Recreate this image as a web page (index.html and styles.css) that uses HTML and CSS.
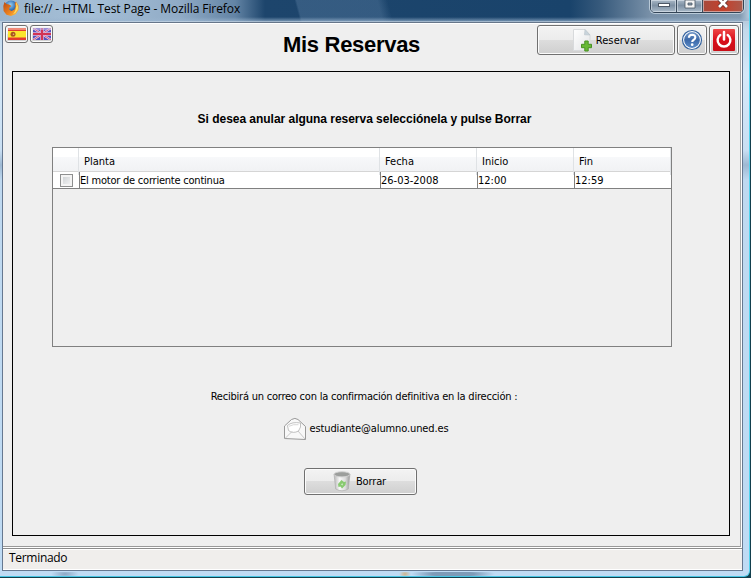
FILE: index.html
```html
<!DOCTYPE html>
<html lang="es">
<head>
<meta charset="utf-8">
<title>Mis Reservas</title>
<link rel="stylesheet" href="styles.css">
</head>
<body>
<div class="window">
  <header class="titlebar">
    <svg class="firefox" width="16" height="16" viewBox="0 0 16 16">
      <defs>
        <radialGradient id="globe" cx=".45" cy=".3" r=".7"><stop offset="0" stop-color="#9bd0f2"/><stop offset=".6" stop-color="#2867b0"/><stop offset="1" stop-color="#123069"/></radialGradient>
        <linearGradient id="fox" x1="0" y1="0" x2="1" y2="1"><stop offset="0" stop-color="#b84812"/><stop offset=".6" stop-color="#ee8420"/><stop offset="1" stop-color="#ffd34a"/></linearGradient>
      </defs>
      <circle cx="8" cy="7.6" r="7" fill="url(#globe)"/>
      <path d="M1.5 2 3.5 4 6 4.5 8.5 6 6.5 7.5 6 9.5 8.5 11 11.5 9.5 12.5 6.5 11.7 3.5 13 1.5 15.5 5.5 15.5 10 12.5 14.3 8 16 3.5 14.7.6 11 .3 6Z" fill="url(#fox)"/>
      <path d="M13 2Q16 6 14.5 10Q13 13 10 14Q14 10 13 2Z" fill="#ffdc62"/>
    </svg>
    <span class="window-title">file:// - HTML Test Page - Mozilla Firefox</span>
    <div class="controls">
      <span class="control"><svg width="14" height="9" viewBox="0 0 14 9"><rect x="1.5" y="3.5" width="11" height="3" fill="#fff" stroke="#4d5866"/></svg></span>
      <span class="control"><svg width="14" height="9" viewBox="0 0 14 9"><path d="M2 0H12V8H2ZM5 3V5H9V3Z" fill="#f4f4f4" fill-rule="evenodd" stroke="#4d5866" stroke-width=".8"/></svg></span>
      <span class="control close"><svg width="14" height="9" viewBox="0 0 14 9"><path d="M3-1 11 7M11-1 3 7" stroke="#5d3030" stroke-width="4.2"/><path d="M3-1 11 7M11-1 3 7" stroke="#fff" stroke-width="2.7"/></svg></span>
    </div>
  </header>
  <div class="client">
    <main class="page">
      <div class="toolbar">
        <div class="languages">
          <button class="btn flag" aria-label="Español"><svg width="18" height="12" viewBox="0 0 18 12"><path fill="#e33a2d" d="M0 0H18V12H0Z"/><path fill="#f08a78" d="M0 0H18V2H0Z"/><path fill="#fbe52c" d="M0 3H18V9.500H0Z"/><circle cx="5" cy="6.300" r="2.500" fill="#a8571c"/><circle cx="5.500" cy="6.300" r=".8" fill="#e9b08a"/></svg></button>
          <button class="btn flag" aria-label="English"><svg width="18" height="12" viewBox="0 0 18 12"><path fill="#5650bd" d="M0 0H18V12H0Z"/><path d="M0 0 18 12M18 0 0 12" stroke="#e6d5f0" stroke-width="2.200"/><path d="M0 0 18 12M18 0 0 12" stroke="#d0527c" stroke-width="1"/><path d="M9 0V12M0 6H18" stroke="#d9b6dd" stroke-width="3.600"/><path d="M9 0V12M0 6H18" stroke="#d23355" stroke-width="2.200"/><path fill="#c9b9e6" opacity=".6" d="M0 0H18V2H0Z"/></svg></button>
        </div>
        <h1>Mis Reservas</h1>
        <div class="actions">
          <button class="btn reserve">
            <svg width="22" height="24" viewBox="0 0 22 24">
              <defs><linearGradient id="paper" x1="0" x2="1" y2="1"><stop offset="0" stop-color="#fff"/><stop offset="1" stop-color="#e3e4e6"/></linearGradient></defs>
              <path d="M1.500 1.500H13L18 7V22.500H1.500Z" fill="url(#paper)" stroke="#d8dadc"/><path d="M13 1.500 18 7 12.500 6.800Z" fill="#c9d4dc" stroke="#b8c2c9" stroke-width=".6"/>
              <path d="M12.800 13H16.200V16.300H19.500V19.700H16.200V23H12.800V19.700H9.500V16.300H12.800Z" fill="#68b936" stroke="#489123"/>
            </svg>
            <span>Reservar</span>
          </button>
          <button class="btn square" aria-label="Ayuda"><svg width="22" height="22" viewBox="0 0 22 22"><defs><linearGradient id="help" x2="0" y2="1"><stop offset="0" stop-color="#7397c7"/><stop offset=".5" stop-color="#3c69a9"/><stop offset="1" stop-color="#5b8bc7"/></linearGradient></defs><circle cx="11" cy="11" r="9.500" fill="#fff" stroke="#34639f" stroke-width="1.200"/><circle cx="11" cy="11" r="7.900" fill="url(#help)"/><path d="M7.900 8.800Q8 5.800 11.200 5.800Q14.400 5.900 14.300 8.500Q14.300 9.900 12.500 11Q11.200 11.800 11.200 13" fill="none" stroke="#fff" stroke-width="2.100"/><circle cx="11.200" cy="15.700" r="1.350" fill="#fff"/></svg></button>
          <button class="btn square" aria-label="Salir"><svg width="24" height="24" viewBox="0 0 24 24"><defs><linearGradient id="power" x2="0" y2="1"><stop offset="0" stop-color="#ef4747"/><stop offset=".5" stop-color="#d90f1b"/><stop offset="1" stop-color="#c90e17"/></linearGradient></defs><rect x="1" y="1" width="22" height="22" rx="1" fill="url(#power)"/><path d="M8.300 6.900A6.400 6.400 0 1 0 15.700 6.900" fill="none" stroke="#fff" stroke-width="2.400" stroke-linecap="round"/><path d="M12 4V11.500" stroke="#fff" stroke-width="2.500" stroke-linecap="round"/></svg></button>
        </div>
      </div>
      <section class="panel">
        <h2>Si desea anular alguna reserva selecciónela y pulse Borrar</h2>
        <div class="table">
          <div class="row head"><span></span><span>Planta</span><span>Fecha</span><span>Inicio</span><span>Fin</span></div>
          <div class="row body-row"><span class="check-cell"><i class="checkbox"></i></span><span class="name">El motor de corriente continua</span><span class="date">26-03-2008</span><span class="time">12:00</span><span class="time">12:59</span></div>
        </div>
        <p class="notice">Recibirá un correo con la confirmación definitiva en la dirección :</p>
        <div class="mail">
          <svg width="24" height="24" viewBox="0 0 24 24"><path d="M1.500 9 8.500 2.500Q12 .3 15 2.500L22.500 9.500V22.500L1.500 21.500Z" fill="#f8f8f8" stroke="#999"/><path d="M4.500 8.500Q9 4.500 17.500 6Q18.500 10 15.500 14Q10 17 5.500 13.500Z" fill="#fff" stroke="#b3b3b3" stroke-width=".8"/><path d="M6 9.300Q10 7 15.500 7.700" fill="none" stroke="#ccc" stroke-width=".8"/><path d="M2 21.500 9 14.500M22 22 15 14" fill="none" stroke="#bbb" stroke-width=".8"/></svg>
          <span>estudiante@alumno.uned.es</span>
        </div>
        <button class="btn delete">
          <svg width="18" height="21" viewBox="0 0 18 21"><defs><linearGradient id="bin"><stop offset="0" stop-color="#b6b6b6"/><stop offset=".35" stop-color="#f7f7f7"/><stop offset=".7" stop-color="#ddd"/><stop offset="1" stop-color="#999"/></linearGradient></defs><path d="M1 3H17L15.300 18Q9 21.500 2.700 18Z" fill="url(#bin)" stroke="#aaa" stroke-width=".6"/><ellipse cx="9" cy="3.300" rx="8" ry="2.600" fill="#9c9e9c" stroke="#d3d3d3"/><path d="M5 13 8.500 9 11 11 13 10.500 12.500 14 9 17.500 7.500 15.500 5.500 16Z" fill="#88ca70"/><path d="M8 13 10 12.500 9.300 14.500Z" fill="#e5f2df"/></svg>
          <span>Borrar</span>
        </button>
      </section>
    </main>
    <footer class="status"><span>Terminado</span></footer>
  </div>
</div>
</body>
</html>
```
FILE: styles.css
```css
* { box-sizing: border-box; }

body {
  margin: 0;
  width: 751px;
  height: 578px;
  overflow: hidden;
  background: #123f4d;
  color: #000;
  font: 11px/14px "DejaVu Sans Condensed", "DejaVu Sans", sans-serif;
}

h1, h2, p { margin: 0; }

.window {
  display: flex;
  flex-direction: column;
  width: 750px;
  height: 577px;
  padding: 0 6px 5px 2px;
  border-right: 1px solid #55d4ee;
  border-bottom: 1px solid #45c5e3;
  border-radius: 0 0 6px 0;
  background:
    radial-gradient(ellipse 42px 5px at 453px 2px, #7e9bb8 0, #7e9bb8 50%, transparent) no-repeat 0 572px / 100% 4px,
    radial-gradient(ellipse 14px 5px at 65px 2px, #8ba7c4 0, transparent) no-repeat 0 572px / 100% 4px,
    radial-gradient(ellipse 6px 4px at 405px 2px, #cdb48c 0, transparent) no-repeat 0 572px / 100% 4px,
    linear-gradient(to bottom, #93a8bb 0, #c3d9eb 30px, #d5e9f9 75px, #c9dff3 150px, #9eb9d3 165px, #bfd9f0 180px, #bfdbf4 100%);
}

.titlebar {
  display: flex;
  flex: 0 0 22px;
  align-items: flex-start;
  margin: 0 -6px 0 -2px;
  padding-left: 3px;
  background:
    linear-gradient(to bottom, transparent 17px, rgba(155, 181, 207, .65) 21px, #d8e3ed 22px),
    linear-gradient(75deg, transparent 290px, rgba(100, 135, 170, .35) 292px, rgba(100, 135, 170, .35) 370px, transparent 380px),
    linear-gradient(90deg, #9bb5cd 0, #a5bfd7 90px, #90abc6 180px, #6384a5 235px, #1d456c 265px, #19436b 570px, #375a7c 600px, #7890a8 650px, #8199b0 740px, #b4c9dc 749px);
}

.firefox { flex: none; }

.window-title {
  margin: 1px 0 0 5px;
  font: 12px/16px "Open Sans", sans-serif;
  letter-spacing: -.07px;
  white-space: nowrap;
}

.controls {
  display: flex;
  height: 14px;
  margin: -1px 5px 0 auto;
  border: 1px solid #344557;
  border-radius: 0 0 5px 5px;
  box-shadow: 0 0 0 1px rgba(218, 230, 240, .65);
  overflow: hidden;
}

.control {
  display: flex;
  justify-content: center;
  align-items: flex-start;
  width: 26px;
  border-right: 1px solid #3b4c5d;
  background: linear-gradient(#a9b8c7, #7e91a4 45%, #a9bac9);
  box-shadow: inset 0 0 0 1px rgba(235, 242, 248, .5);
}

.control.close {
  width: 40px;
  border: 0;
  background: linear-gradient(90deg, #a64a3d, #c5402b 50%, #a95a4c);
}

.client {
  display: flex;
  flex: 1;
  flex-direction: column;
  border: 1px solid #667890;
  border-top-color: #66768a;
  background: #fff;
}

.page {
  display: flex;
  flex: 1;
  flex-direction: column;
  margin: 1px 1px 1px 0;
  border-right: 1px solid #a8a8a8;
  border-bottom: 1px solid #999;
  background: #efefef;
}

.toolbar {
  display: flex;
  justify-content: space-between;
  height: 47px;
  padding: 1px 1px 0 2px;
}

.languages, .actions { display: flex; align-items: flex-start; }
.languages { gap: 2px; width: 278px; }
.actions { justify-content: flex-end; gap: 2px; width: 300px; }

h1 {
  flex: 1;
  margin-top: 6px;
  font: bold 22px/28px "Liberation Sans", sans-serif;
  letter-spacing: -.3px;
  white-space: nowrap;
}

.btn {
  display: flex;
  align-items: center;
  justify-content: center;
  padding: 0;
  border: 1px solid #707070;
  border-radius: 3px;
  background: linear-gradient(#f3f3f3 0, #ececec 49%, #dddddd 50%, #cfcfcf 100%);
  box-shadow: inset 0 0 0 1px #fbfbfb;
  color: #000;
  font: inherit;
}

.flag { width: 23px; height: 18px; }
.reserve { width: 138px; height: 30px; gap: 2px; }
.reserve span { padding-top: 2px; letter-spacing: .1px; }
.square { width: 30px; height: 30px; }

.panel {
  display: flex;
  flex-direction: column;
  align-items: center;
  width: 718px;
  height: 465px;
  margin-left: 9px;
  border: 1px solid #000;
}

h2 {
  margin: 39px 0 0 -13px;
  font: bold 12px/16px "Liberation Sans", sans-serif;
  letter-spacing: -.03px;
  white-space: nowrap;
}

.table {
  align-self: flex-start;
  width: 620px;
  height: 200px;
  margin: 20px 0 0 39px;
  border: 1px solid #808080;
}

.row {
  display: grid;
  grid-template-columns: 26px 301px 97px 97px 97px;
  white-space: nowrap;
}

.head {
  height: 24px;
  border-bottom: 1px solid #d5d5d5;
  background: linear-gradient(#fff 0, #fff 40%, #f7f8fa 41%, #f1f2f4 100%);
  line-height: 27px;
}

.head span { padding-left: 5px; border-right: 1px solid #dfe2e5; }

.body-row {
  height: 17px;
  border-bottom: 1px solid #808080;
  background: #fff;
  line-height: 17px;
}

.body-row > span { border-left: 1px solid #808080; }
.body-row > .name { letter-spacing: -.22px; }
.body-row > .check-cell { display: flex; align-items: center; padding-left: 7px; border: 0; }
.checkbox {
  width: 13px;
  height: 13px;
  border: 1px solid #8e8f8f;
  background: linear-gradient(135deg, #c8cccf, #f8f8f8);
  box-shadow: inset 0 0 0 2px #f4f4f4;
}

.notice { margin: 43px 0 0 -14px; letter-spacing: -.22px; white-space: nowrap; }

.mail {
  display: flex;
  align-items: center;
  gap: 3px;
  height: 24px;
  margin: 13px 0 0 -11px;
  letter-spacing: -.12px;
}

.delete {
  width: 113px;
  height: 27px;
  gap: 5px;
  margin: 27px 0 0 -21px;
}
.delete svg { margin-left: -2px; }
.delete span { letter-spacing: -.15px; }

.status {
  display: flex;
  align-items: center;
  height: 22px;
  padding: 0 0 2px 6px;
  border-top: 1px solid #8c8c8c;
  border-bottom: 1px solid #fff;
  background: linear-gradient(#fff 1px, #f0eeec 1px);
  font: 12px/16px "Open Sans", sans-serif;
  letter-spacing: -.3px;
}
```
